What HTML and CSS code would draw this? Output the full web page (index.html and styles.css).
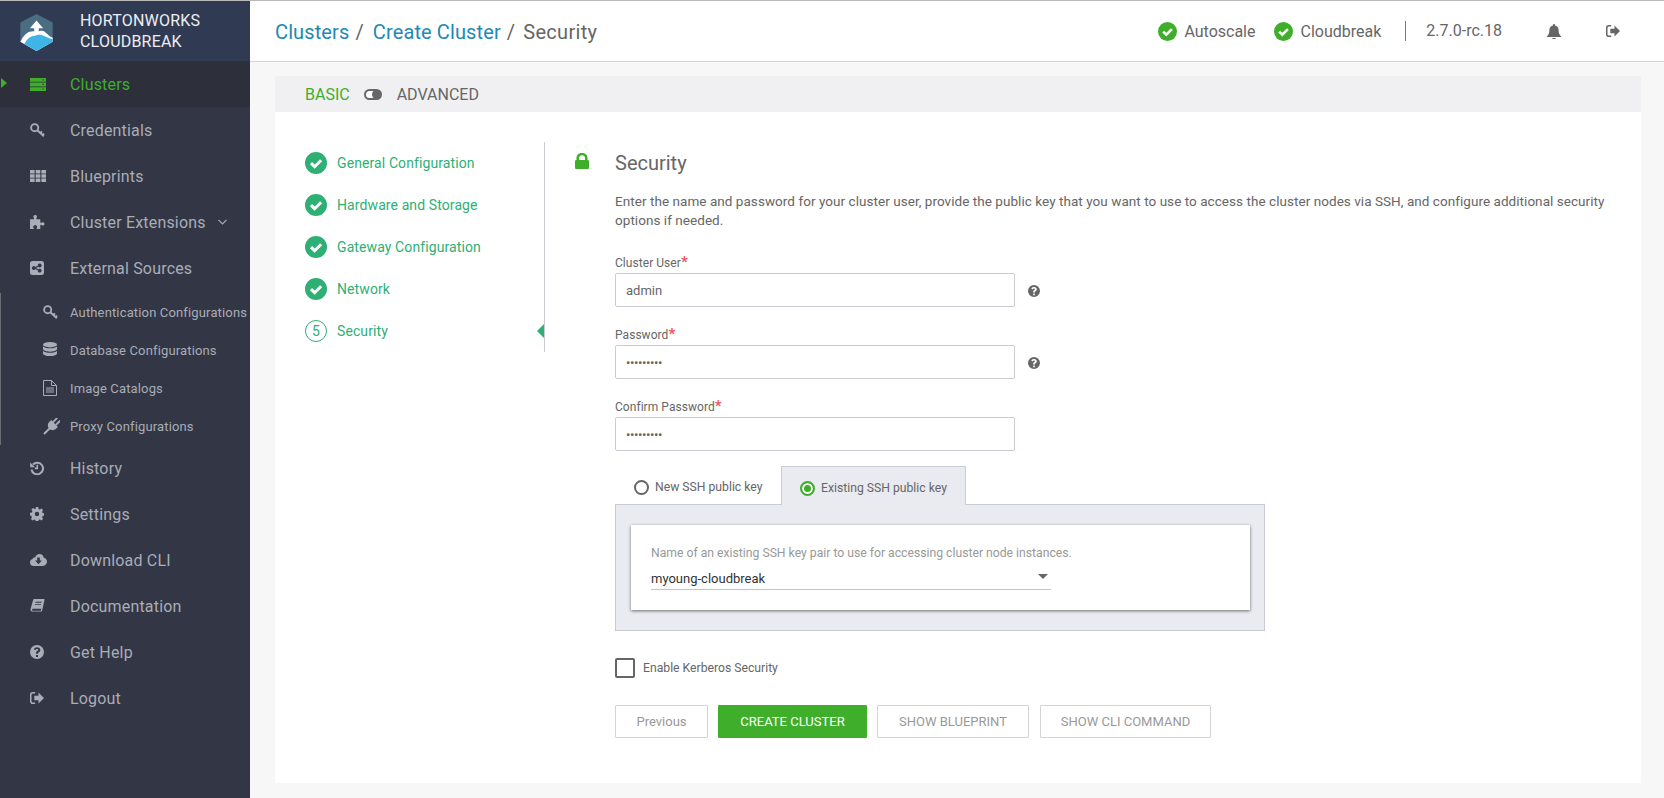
FILE: index.html
```html
<!DOCTYPE html>
<html>
<head>
    <meta charset="utf-8">
    <title>Hortonworks Cloudbreak</title>
    <link rel="stylesheet" href="styles.css">
</head>
<body>
<svg class="defs" width="0" height="0">
    <symbol id="i-servers" viewBox="0 0 16 13"><path fill-rule="evenodd" d="M0 0h16v3.800H0zM0 4.600h16v3.800H0zM0 9.200h16V13H0zM12.500 1.200v1.200h1.200V1.200zM12.500 5.800V7h1.200V5.800zM12.500 10.400v1.200h1.200v-1.200z"/><path opacity=".45" d="M1.500 1.400h9v1h-9zM1.500 6h9v1h-9zM1.500 10.600h9v1h-9z"/></symbol>
    <symbol id="i-key" viewBox="0 0 16 16"><circle cx="5" cy="5" r="3.800" fill="none" stroke="currentColor" stroke-width="2"/><path fill="none" stroke="currentColor" stroke-width="2" d="M7.800 7.800l7 6.400M11 10.700l1.800-1.800M13.400 13l1.600-1.600"/></symbol>
    <symbol id="i-grid" viewBox="0 0 16 12"><path d="M0 0h4.600v3.400H0zM5.700 0h4.600v3.400H5.700zM11.400 0H16v3.400h-4.600zM0 4.300h4.600v3.400H0zM5.700 4.300h4.600v3.400H5.700zM11.400 4.300H16v3.400h-4.600zM0 8.600h4.600V12H0zM5.700 8.600h4.600V12H5.700zM11.400 8.600H16V12h-4.600z"/></symbol>
    <symbol id="i-puzzle" viewBox="0 0 16 15"><path d="M0 4.500h3.600c.8 0 .9-.6.500-1.200-.5-.7-.5-1.300-.5-1.700C3.600.6 4.600 0 5.500 0s1.900.6 1.900 1.600c0 .5 0 1-.5 1.700-.4.600-.3 1.200.5 1.200H11v3.200c0 .8.600.9 1.200.5.600-.5 1.200-.5 1.600-.5 1.100 0 1.700 1 1.700 1.900s-.6 1.700-1.700 1.700c-.4 0-1 0-1.600-.5-.6-.4-1.200-.3-1.200.5V15H7.600c-.7 0-.9-.6-.5-1.100.4-.5.500-.9.500-1.400 0-1-1-1.600-2.100-1.600s-2.100.6-2.100 1.600c0 .5.100.9.500 1.400.4.500.2 1.100-.5 1.100H0z"/></symbol>
    <symbol id="i-share" viewBox="0 0 14 14"><path fill-rule="evenodd" d="M2.500 0h9A2.500 2.500 0 0 1 14 2.500v9a2.500 2.500 0 0 1-2.500 2.500h-9A2.500 2.500 0 0 1 0 11.500v-9A2.500 2.500 0 0 1 2.500 0zM9.700 2.600a1.900 1.900 0 0 0-1.900 2.100L5.400 6a1.900 1.900 0 1 0 0 2l2.400 1.300a1.900 1.900 0 1 0 .6-1.100L6 7l2.400-1.200a1.900 1.900 0 1 0 1.300-3.200z"/></symbol>
    <symbol id="i-db" viewBox="0 0 14 16"><ellipse cx="7" cy="2.700" rx="7" ry="2.700"/><path d="M0 4.300c1 1.400 4 2 7 2s6-.6 7-2v2.800c0 1.500-3.100 2.600-7 2.600S0 8.600 0 7.100zM0 8.700c1 1.400 4 2 7 2s6-.6 7-2v2.800c0 1.500-3.100 2.600-7 2.600s-7-1.100-7-2.600z"/></symbol>
    <symbol id="i-file" viewBox="0 0 14 16"><path fill="none" stroke="currentColor" d="M.5.500h8l5 5v10H.5zM8.500.5v5h5"/><path d="M3 7.500h8v1H3zM3 9.500h8v1H3zM3 11.500h8v1H3z"/></symbol>
    <symbol id="i-plug" viewBox="0 0 16 16"><g transform="rotate(45 8 8)"><path d="M5.200-1.500h1.800v5.500H5.200zM9 -1.500h1.800v5.500H9zM3.500 4h9v2.500c0 2.500-2 4.500-4.500 4.500s-4.500-2-4.500-4.500zM7.100 10h1.800v8H7.100z"/></g></symbol>
    <symbol id="i-history" viewBox="0 0 14 14"><path fill="none" stroke="currentColor" stroke-width="2" d="M3 3.500A5.800 5.800 0 1 1 1.500 8.500"/><path d="M.2 1.500L5 6.200H.2z"/><path fill="none" stroke="currentColor" stroke-width="1.600" d="M7.300 3.800v3.600H4.800"/></symbol>
    <symbol id="i-gear" viewBox="0 0 14 14"><path fill-rule="evenodd" d="M5.800 0h2.400l.4 1.900 1.100.5 1.700-1 1.700 1.700-1 1.700.5 1.100 1.900.4v2.400l-1.900.4-.5 1.100 1 1.700-1.700 1.700-1.700-1-1.100.5-.4 1.900H5.800l-.4-1.900-1.100-.5-1.700 1-1.700-1.700 1-1.700-.5-1.100L0 8.200V5.800l1.900-.4.500-1.100-1-1.700 1.700-1.700 1.700 1 1.100-.5zM7 4.800a2.200 2.200 0 1 0 0 4.400 2.200 2.200 0 0 0 0-4.400z"/></symbol>
    <symbol id="i-cloud" viewBox="0 0 17 12"><path fill-rule="evenodd" d="M9.500 0c2.300 0 4 1.500 4.300 3.700 1.900.4 3.200 1.900 3.200 3.900C17 10 15.200 12 12.700 12H3.600C1.500 12 0 10.400 0 8.400c0-1.600 1-3 2.500-3.400C2.800 3.900 3.900 3.300 5.100 3.500 5.800 1.400 7.500 0 9.500 0zM7.200 3.500v3H5.100l3.400 3.700 3.400-3.700H9.800v-3z"/></symbol>
    <symbol id="i-book" viewBox="0 0 15 15"><path fill-rule="evenodd" d="M4 0h10.500c.5 0 .6.300.5.700l-2.500 11.500c-.2.900-.7 1.300-1.600 1.300H2.300C1 13.500 0 12.700 0 11.500c0-.4.100-.8.200-1.200L2.800 1C3 .4 3.400 0 4 0zM5.500 3l-.2 1h6.500l.2-1zM4.900 5.500l-.2 1h6.500l.2-1zM2.800 10.500c-.8 0-1.200.4-1.200 1s.4 1 1.200 1h8.300l.4-2z"/></symbol>
    <symbol id="i-help" viewBox="0 0 14 14"><path fill-rule="evenodd" d="M7 0a7 7 0 1 1 0 14A7 7 0 0 1 7 0zM6 10v2h2v-2zM7.100 2.300c-1.700 0-2.700.8-3.200 2l1.400 1c.4-.8.900-1.200 1.700-1.200.7 0 1.100.4 1.100.8 0 .5-.4.800-1 1.200C6.300 6.600 6 7.200 6 8v.8h2v-.6c0-.4.300-.6.800-.9.800-.5 1.500-1.100 1.500-2.300 0-1.600-1.500-2.700-3.200-2.700z"/></symbol>
    <symbol id="i-logout" viewBox="0 0 14 12"><path d="M5.200 1.400H3A1.500 1.500 0 0 0 1.500 3v6A1.500 1.500 0 0 0 3 10.600h2.200V12H2.800A2.800 2.800 0 0 1 0 9.200V2.800A2.800 2.800 0 0 1 2.800 0h2.400z"/><path d="M8.500.6L14 6l-5.500 5.400V8.300H4.300V3.700h4.200z"/></symbol>
    <symbol id="i-bell" viewBox="0 0 14 15"><path d="M7 0c.6 0 1 .4 1 1v.6c2.200.4 3.600 2.200 3.600 4.400 0 3.300.9 4.800 2.400 6.300v.7H0v-.7C1.500 10.800 2.400 9.300 2.400 6c0-2.200 1.400-4 3.600-4.400V1c0-.6.400-1 1-1zM5 14h4c0 .6-.9 1-2 1s-2-.4-2-1z"/></symbol>
    <symbol id="i-lock" viewBox="0 0 14 16"><path fill-rule="evenodd" d="M1.500 7V4.700C1.500 2 3.900 0 7 0s5.500 2 5.500 4.700V7h.2c.7 0 1.300.6 1.300 1.300v6.400c0 .7-.6 1.300-1.300 1.300H1.300C.6 16 0 15.400 0 14.700V8.300C0 7.600.6 7 1.300 7zM4 7h6V4.700C10 3.300 8.700 2.300 7 2.300S4 3.300 4 4.700z"/></symbol>
    <symbol id="i-check" viewBox="0 0 22 22"><circle cx="11" cy="11" r="11" fill="currentColor"/><path fill="none" stroke="#fff" stroke-width="3" d="M6 11.200l3.600 3.500 6.500-6.500"/></symbol>
</svg>

<div class="app">
    <aside class="sidebar">
        <div class="logo">
            <svg class="logo-mark" viewBox="0 0 98 112">
                <path fill="#4a6d82" d="M49 0l49 26v58l-49 28L0 84V26z"/>
                <path fill="#fff" d="M0 84C8 70 16 58 28 54c12-5 22 2 34-3 12-4 20 14 36 21v12l-49 28z"/>
                <path fill="#3fb4e6" d="M12 91c8-14 18-26 34-25 12-12 32 6 52 10v8l-49 28z"/>
                <path fill="#fff" d="M49 20l20 23H56v20H42V43H29z"/>
            </svg>
            <div class="logo-text">HORTONWORKS<br>CLOUDBREAK</div>
        </div>
        <nav>
            <a class="nav-item active">
                <span class="nav-icon"><svg width="16" height="13"><use href="#i-servers"/></svg></span>Clusters
            </a>
            <a class="nav-item">
                <span class="nav-icon"><svg width="15" height="15"><use href="#i-key"/></svg></span>Credentials
            </a>
            <a class="nav-item">
                <span class="nav-icon"><svg width="16" height="12"><use href="#i-grid"/></svg></span>Blueprints
            </a>
            <a class="nav-item">
                <span class="nav-icon"><svg width="15" height="14"><use href="#i-puzzle"/></svg></span>Cluster Extensions
                <svg class="chevron" width="9" height="6" viewBox="0 0 9 6"><path fill="none" stroke="currentColor" stroke-width="1.200" d="M.5.800l4 4 4-4"/></svg>
            </a>
            <a class="nav-item">
                <span class="nav-icon"><svg width="14" height="14"><use href="#i-share"/></svg></span>External Sources
            </a>
            <div class="subnav">
                <a class="sub-item">
                    <span class="sub-icon"><svg width="15" height="15"><use href="#i-key"/></svg></span>Authentication Configurations
                </a>
                <a class="sub-item">
                    <span class="sub-icon"><svg width="14" height="16"><use href="#i-db"/></svg></span>Database Configurations
                </a>
                <a class="sub-item">
                    <span class="sub-icon"><svg width="14" height="16"><use href="#i-file"/></svg></span>Image Catalogs
                </a>
                <a class="sub-item">
                    <span class="sub-icon"><svg width="17" height="17"><use href="#i-plug"/></svg></span>Proxy Configurations
                </a>
            </div>
            <a class="nav-item">
                <span class="nav-icon"><svg width="14" height="14"><use href="#i-history"/></svg></span>History
            </a>
            <a class="nav-item">
                <span class="nav-icon"><svg width="14" height="14"><use href="#i-gear"/></svg></span>Settings
            </a>
            <a class="nav-item">
                <span class="nav-icon"><svg width="17" height="12"><use href="#i-cloud"/></svg></span>Download CLI
            </a>
            <a class="nav-item">
                <span class="nav-icon"><svg width="15" height="14"><use href="#i-book"/></svg></span>Documentation
            </a>
            <a class="nav-item">
                <span class="nav-icon"><svg width="14" height="14"><use href="#i-help"/></svg></span>Get Help
            </a>
            <a class="nav-item">
                <span class="nav-icon"><svg width="14" height="12"><use href="#i-logout"/></svg></span>Logout
            </a>
        </nav>
    </aside>

    <div class="main">
        <header class="topbar">
            <div class="crumbs">
                <a>Clusters</a><span class="sep">/</span>
                <a>Create Cluster</a><span class="sep">/</span>
                <span class="crumb-now">Security</span>
            </div>
            <div class="status">
                <svg class="ok" width="19" height="19"><use href="#i-check"/></svg><span class="status-name">Autoscale</span>
                <svg class="ok" width="19" height="19"><use href="#i-check"/></svg><span class="status-name">Cloudbreak</span>
                <span class="version">2.7.0-rc.18</span>
                <svg class="bell" width="14" height="15"><use href="#i-bell"/></svg>
                <svg width="14" height="12"><use href="#i-logout"/></svg>
            </div>
        </header>

        <div class="page">
            <div class="modebar">
                <span class="mode-on">BASIC</span>
                <span class="switch"></span>
                <span>ADVANCED</span>
            </div>
            <div class="card">
                <ul class="steps">
                    <li><svg width="22" height="22"><use href="#i-check"/></svg>General Configuration</li>
                    <li><svg width="22" height="22"><use href="#i-check"/></svg>Hardware and Storage</li>
                    <li><svg width="22" height="22"><use href="#i-check"/></svg>Gateway Configuration</li>
                    <li><svg width="22" height="22"><use href="#i-check"/></svg>Network</li>
                    <li class="current"><span class="step-num">5</span>Security</li>
                </ul>
                <div class="section">
                    <svg class="lock" width="14" height="16"><use href="#i-lock"/></svg>
                    <div class="form">
                        <h2>Security</h2>
                        <p class="intro">Enter the name and password for your cluster user, provide the public key that you want to use to access the cluster nodes via SSH, and configure additional security options if needed.</p>

                        <label class="field-label">Cluster User<i>*</i></label>
                        <div class="field-row">
                            <input class="text-input" type="text" value="admin">
                            <svg class="help" width="12" height="12"><use href="#i-help"/></svg>
                        </div>

                        <label class="field-label">Password<i>*</i></label>
                        <div class="field-row">
                            <input class="text-input" type="password" value="password1">
                            <svg class="help" width="12" height="12"><use href="#i-help"/></svg>
                        </div>

                        <label class="field-label">Confirm Password<i>*</i></label>
                        <div class="field-row">
                            <input class="text-input" type="password" value="password1">
                        </div>

                        <div class="tabs">
                            <div class="tab"><span class="radio"></span>New SSH public key</div>
                            <div class="tab selected"><span class="radio on"></span>Existing SSH public key</div>
                        </div>
                        <div class="tab-panel">
                            <div class="key-card">
                                <div class="key-hint">Name of an existing SSH key pair to use for accessing cluster node instances.</div>
                                <div class="key-select">myoung-cloudbreak<span class="caret"></span></div>
                            </div>
                        </div>

                        <div class="kerberos"><span class="checkbox"></span>Enable Kerberos Security</div>

                        <div class="actions">
                            <button class="btn btn-prev">Previous</button>
                            <button class="btn btn-primary">CREATE CLUSTER</button>
                            <button class="btn btn-blueprint">SHOW BLUEPRINT</button>
                            <button class="btn btn-cli">SHOW CLI COMMAND</button>
                        </div>
                    </div>
                </div>
            </div>
        </div>
    </div>
</div>
</body>
</html>
```

FILE: styles.css
```css
html,body{margin:0;padding:0;height:100%;overflow:hidden;}
body{font-family:Roboto,"Liberation Sans",sans-serif;background:#f7f7f8;color:#666;}
.defs{position:absolute;}
svg{fill:currentColor;display:block;flex:none;}
a{cursor:pointer;}

.app{display:flex;height:798px;}

/* left menu */
.sidebar{width:250px;flex:none;background:#333644;color:#a9adb8;}
.logo{height:60px;border-top:1px solid #b9b9b9;background:#303b53;display:flex;align-items:center;box-sizing:content-box;}
.logo-mark{width:33px;height:37px;margin-left:20px;margin-top:3px;}
.logo-text{margin-left:27px;font-size:16px;line-height:21px;color:#eceef1;letter-spacing:.2px;}
.nav-item{height:46px;display:flex;align-items:center;font-size:16px;letter-spacing:.18px;}
.nav-icon{width:70px;padding-left:30px;box-sizing:border-box;flex:none;}
.chevron{margin-left:12px;}
.nav-item.active{background:#2d2f3b;color:#3fae2a;position:relative;}
.nav-item.active:before{content:"";position:absolute;left:1px;top:17px;border-left:6px solid #3fae2a;border-top:5px solid transparent;border-bottom:5px solid transparent;}
.subnav{padding-top:2px;}
.sub-item{height:38px;display:flex;align-items:center;font-size:13px;letter-spacing:.15px;position:relative;}
.sub-item:before{content:"";position:absolute;left:0;top:0;bottom:0;width:1px;background:#6a6c72;}
.sub-icon{width:70px;padding-left:43px;box-sizing:border-box;flex:none;}

/* header */
.main{flex:1;min-width:0;display:flex;flex-direction:column;}
.topbar{height:60px;flex:none;background:#fff;border-top:1px solid #b9b9b9;border-bottom:1px solid #d4d4d4;display:flex;align-items:center;justify-content:space-between;padding:0 44px 0 25px;box-sizing:content-box;margin-bottom:-1px;}
.crumbs{font-size:20px;letter-spacing:.12px;display:flex;padding-top:2px;}
.crumbs a{color:#2089b5;}
.crumbs .sep{color:#666;margin:0 9px 0 6px;}
.crumb-now{margin-left:-1px;color:#666;letter-spacing:.3px;}
.status{display:flex;align-items:center;font-size:16px;}
.ok{color:#3fae2a;margin-right:7px;}
.status-name{margin-right:19px;}
.status-name + .ok + .status-name{margin-right:24px;}
.version{border-left:1px solid #777;padding-left:20px;line-height:20px;}
.bell{margin:0 45px;color:#666;}

/* page body */
.page{flex:1;padding:15px 23px 15px 25px;display:flex;flex-direction:column;min-height:0;}
.modebar{height:36px;flex:none;background:#f0f0f2;display:flex;align-items:center;padding-left:30px;font-size:16px;color:#666;}
.mode-on{color:#3fae2a;}
.switch{width:14px;height:7px;border:2px solid #666;border-radius:6px;margin:0 15px 0 14px;position:relative;background:#fff;}
.switch:after{content:"";position:absolute;right:-1px;top:-1px;width:9px;height:9px;border-radius:50%;background:#666;}
.card{flex:1;background:#fff;display:flex;padding-top:30px;min-height:0;}

/* wizard steps */
.steps{list-style:none;margin:0;padding:0 0 0 30px;width:239px;height:210px;border-right:1px solid #c9ccd6;flex:none;color:#2eb074;font-size:14px;letter-spacing:.1px;}
.steps li{height:42px;display:flex;align-items:center;gap:10px;position:relative;}
.step-num{width:20px;height:20px;border:1px solid #2eb074;border-radius:50%;display:flex;align-items:center;justify-content:center;}
.steps .current:after{content:"";position:absolute;right:0;top:14px;border-right:7px solid #2eb074;border-top:7px solid transparent;border-bottom:7px solid transparent;}

/* form */
.section{display:flex;padding-left:30px;flex:1;}
.lock{color:#3fae2a;margin:11px 26px 0 0;}
.form{flex:1;padding-right:25px;}
.form h2{margin:0;font-size:20px;font-weight:400;line-height:42px;color:#666;}
.intro{margin:8px 0 23px;font-size:13.500px;letter-spacing:.05px;line-height:19px;color:#666;}
.field-label{display:block;font-size:12px;letter-spacing:.05px;line-height:16px;padding-top:2px;margin-bottom:2px;color:#666;}
.field-label i{color:#ef5560;font-style:normal;font-weight:700;font-size:15px;line-height:10px;}
.field-row{display:flex;align-items:center;gap:13px;margin-bottom:18px;}
.text-input{width:400px;height:34px;box-sizing:border-box;border:1px solid #c9ccd6;border-radius:2px;padding:0 10px;font:13px Roboto,"Liberation Sans",sans-serif;color:#666;outline:none;}
.text-input[type=password]{letter-spacing:-.4px;}
.help{color:#666;margin-top:2px;}

/* ssh key tabs */
.tabs{display:flex;margin-top:-3px;height:38px;position:relative;z-index:1;}
.tab{width:166px;box-sizing:border-box;display:flex;align-items:center;padding-left:19px;font-size:12.200px;color:#666;padding-top:4px;}
.tab.selected{width:185px;padding-left:18px;background:#e9ebf0;border:1px solid #c9ccd6;border-bottom:none;height:39px;}
.radio{width:11px;height:11px;border:2px solid #666;border-radius:50%;margin-right:6px;flex:none;background:#fff;}
.radio.on{border-color:#3fae2a;background:#3fae2a;box-shadow:inset 0 0 0 2px #fff;}
.tab-panel{width:650px;height:127px;box-sizing:border-box;background:#e9ebf0;border:1px solid #c9ccd6;padding:20px 14px 20px 15px;}
.key-card{height:85px;background:#fff;box-shadow:0 1px 3px rgba(0,0,0,.55);padding:0 20px;box-sizing:border-box;overflow:hidden;}
.key-hint{font-size:12.200px;color:#999;margin-top:20px;line-height:16px;}
.key-select{width:400px;height:22px;margin-top:6px;border-bottom:1px solid #c4c4c4;font-size:13px;line-height:24px;color:#333;position:relative;}
.caret{position:absolute;right:3px;top:7px;border-top:5px solid #666;border-left:5px solid transparent;border-right:5px solid transparent;}

.kerberos{display:flex;align-items:center;margin-top:27px;height:20px;font-size:12.200px;color:#666;}
.checkbox{width:16px;height:16px;border:2px solid #666;border-radius:2px;margin-right:8px;}

.actions{display:flex;gap:10px;margin-top:27px;}
.btn{height:33px;border:1px solid #d4d4d4;background:#fff;color:#999;font:13px Roboto,"Liberation Sans",sans-serif;border-radius:1px;padding:0;}
.btn-prev{width:93px;}
.btn-primary{width:149px;background:#3fae2a;border-color:#3fae2a;color:#fff;}
.btn-blueprint{width:152px;}
.btn-cli{width:171px;margin-left:1px;}
```
